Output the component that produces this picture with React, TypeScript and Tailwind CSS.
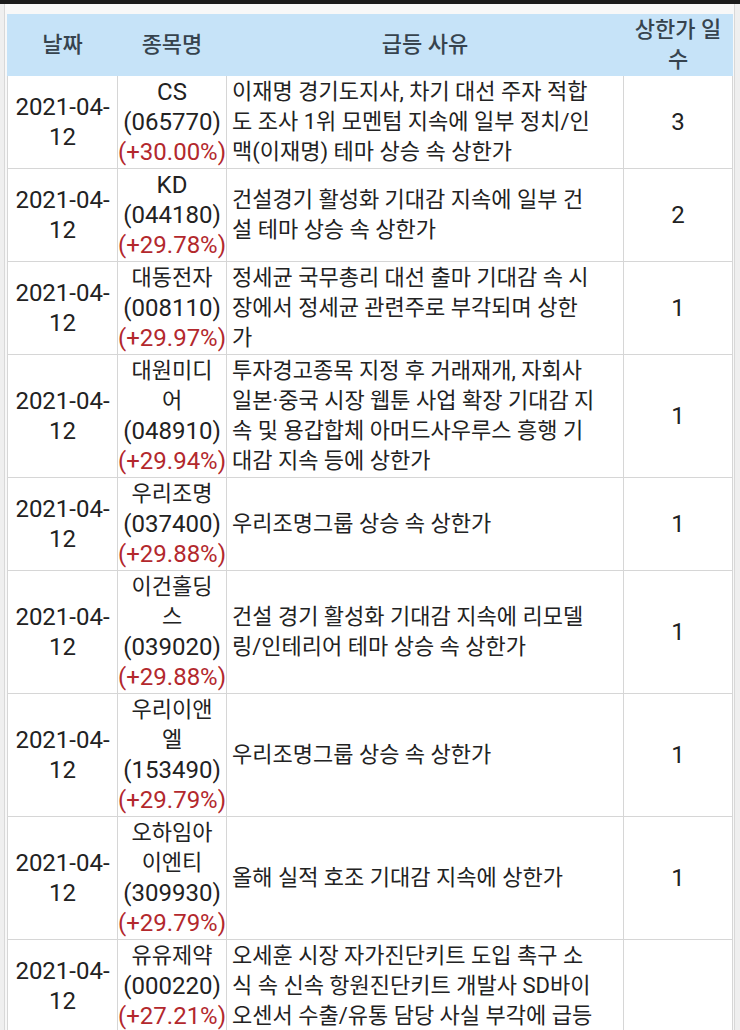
import React from "react";

interface Row {
    name: string[];
    code: string;
    pct: string;
    reason: string[];
    days: string;
}

const rows: Row[] = [
    {
        name: ["CS"],
        code: "065770",
        pct: "+30.00%",
        reason: ["이재명 경기도지사, 차기 대선 주자 적합", "도 조사 1위 모멘텀 지속에 일부 정치/인", "맥(이재명) 테마 상승 속 상한가"],
        days: "3",
    },
    {
        name: ["KD"],
        code: "044180",
        pct: "+29.78%",
        reason: ["건설경기 활성화 기대감 지속에 일부 건", "설 테마 상승 속 상한가"],
        days: "2",
    },
    {
        name: ["대동전자"],
        code: "008110",
        pct: "+29.97%",
        reason: ["정세균 국무총리 대선 출마 기대감 속 시", "장에서 정세균 관련주로 부각되며 상한", "가"],
        days: "1",
    },
    {
        name: ["대원미디", "어"],
        code: "048910",
        pct: "+29.94%",
        reason: [
            "투자경고종목 지정 후 거래재개, 자회사",
            "일본·중국 시장 웹툰 사업 확장 기대감 지",
            "속 및 용갑합체 아머드사우루스 흥행 기",
            "대감 지속 등에 상한가",
        ],
        days: "1",
    },
    {
        name: ["우리조명"],
        code: "037400",
        pct: "+29.88%",
        reason: ["우리조명그룹 상승 속 상한가"],
        days: "1",
    },
    {
        name: ["이건홀딩", "스"],
        code: "039020",
        pct: "+29.88%",
        reason: ["건설 경기 활성화 기대감 지속에 리모델", "링/인테리어 테마 상승 속 상한가"],
        days: "1",
    },
    {
        name: ["우리이앤", "엘"],
        code: "153490",
        pct: "+29.79%",
        reason: ["우리조명그룹 상승 속 상한가"],
        days: "1",
    },
    {
        name: ["오하임아", "이엔티"],
        code: "309930",
        pct: "+29.79%",
        reason: ["올해 실적 호조 기대감 지속에 상한가"],
        days: "1",
    },
    {
        name: ["유유제약"],
        code: "000220",
        pct: "+27.21%",
        reason: [
            "오세훈 시장 자가진단키트 도입 촉구 소",
            "식 속 신속 항원진단키트 개발사 SD바이",
            "오센서 수출/유통 담당 사실 부각에 급등",
        ],
        days: "",
    },
];

const hangul = /[가-힣]/;

export default function App() {
    return (
        <div className="w-[740px] min-h-screen bg-[#efefef] font-['Roboto','Noto_Sans_CJK_KR',sans-serif] text-[#222]">
            <div className="h-1 bg-[#1b1b1b]" />
            <div className="ml-1 w-[731px] border-x border-[#d8d8d8] bg-[#f8f8f8] pt-[10px] pl-[2px]">
                <table className="w-[725px] table-fixed border-collapse leading-[30px]">
                    <colgroup>
                        <col className="w-[110px]" />
                        <col className="w-[109px]" />
                        <col className="w-[397px]" />
                        <col className="w-[109px]" />
                    </colgroup>
                    <thead>
                        <tr className="bg-[#c6e3f8] text-[22px] text-[#36434e]">
                            <th className="h-[60px] border border-[#c6e3f8] p-0 font-medium">날짜</th>
                            <th className="border border-[#c6e3f8] p-0 font-medium">종목명</th>
                            <th className="border border-[#c6e3f8] p-0 font-medium">급등 사유</th>
                            <th className="border border-[#c6e3f8] p-0 font-medium">
                                상한가 일<br />수
                            </th>
                        </tr>
                    </thead>
                    <tbody>
                        {rows.map((r, i) => (
                            <tr key={i} className="bg-white">
                                <td className="border border-[#d6d6d6] py-px text-center text-[24px]">
                                    2021-04-
                                    <br />
                                    12
                                </td>
                                <td className="border border-[#d6d6d6] py-px text-center whitespace-nowrap">
                                    {r.name.map((n, j) => (
                                        <div key={j} className={hangul.test(n) ? "text-[22px]" : "text-[24px]"}>
                                            {n}
                                        </div>
                                    ))}
                                    <div className="text-[24px]">({r.code})</div>
                                    <div className="text-[24px] text-[#b3282d]">({r.pct})</div>
                                </td>
                                <td className="border border-[#d6d6d6] py-px pl-[5px] text-[22px] whitespace-nowrap">
                                    {r.reason.map((l, j) => (
                                        <div key={j}>{l}</div>
                                    ))}
                                </td>
                                <td className="border border-[#d6d6d6] py-px text-center text-[24px]">{r.days}</td>
                            </tr>
                        ))}
                    </tbody>
                </table>
            </div>
        </div>
    );
}
